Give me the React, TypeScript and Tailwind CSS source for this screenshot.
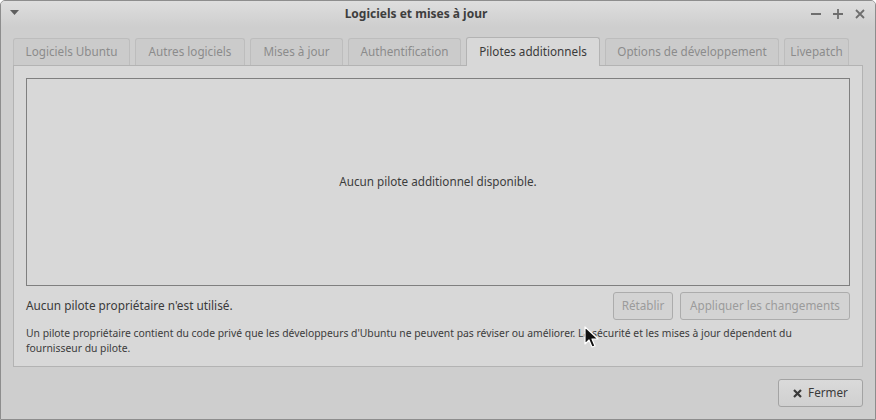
import React from "react";

const tabs = [
  { label: "Logiciels Ubuntu", w: "w-[117px]" },
  { label: "Autres logiciels", w: "w-[110px]" },
  { label: "Mises à jour", w: "w-[93px]" },
  { label: "Authentification", w: "w-[113px]" },
  { label: "Pilotes additionnels", w: "w-[134px]", active: true },
  { label: "Options de développement", w: "w-[174px]" },
  { label: "Livepatch", w: "w-[65px]" },
];

function Cursor() {
  return (
    <svg className="absolute left-[583px] top-[325px]" width="16" height="23" viewBox="0 0 16 23">
      <path
        d="M1 1 L1 18 L5 14 L8 21 L11 20 L8 13 L14 13 Z"
        fill="#111"
        stroke="#fff"
        strokeWidth="1.2"
        strokeLinejoin="round"
      />
    </svg>
  );
}

export default function App() {
  return (
    <div
      className="relative w-[876px] h-[420px] overflow-hidden bg-[#cecece] border border-[#8d8d8d] rounded-t-[5px] flex flex-col text-[#3c3c3c]"
      style={{ fontFamily: '"Noto Sans", "Open Sans", sans-serif' }}
    >
      {/* title bar */}
      <div className="relative h-[26px] shrink-0 flex items-center justify-center pr-[44px] bg-gradient-to-b from-[#dedede] to-[#cecece]">
        <svg className="absolute left-[9px] top-[9px]" width="9" height="6" viewBox="0 0 9 6">
          <path d="M0 0 L9 0 L4.5 5 Z" fill="#5e5e5e" />
        </svg>
        <span className="text-[12px] font-bold text-[#3e3e3e]">Logiciels et mises à jour</span>
        <div className="absolute right-[10px] top-[8px] flex items-center gap-[12px]">
          <svg width="10" height="10" viewBox="0 0 10 10">
            <path d="M0 5 H10" stroke="#6e6e6e" strokeWidth="1.8" />
          </svg>
          <svg width="10" height="10" viewBox="0 0 10 10">
            <path d="M0 5 H10 M5 0 V10" stroke="#6e6e6e" strokeWidth="1.8" />
          </svg>
          <svg width="10" height="10" viewBox="0 0 10 10">
            <path d="M1 1 L9 9 M9 1 L1 9" stroke="#6e6e6e" strokeWidth="1.8" />
          </svg>
        </div>
      </div>

      <div className="flex flex-col px-[12px] pt-[9px]">
        {/* tabs */}
        <div className="flex items-end gap-[5px] h-[29px]">
          {tabs.map((t) =>
            t.active ? (
              <div
                key={t.label}
                className={`${t.w} h-[29px] -mb-px relative z-10 flex items-center justify-center rounded-t-[3px] border border-b-0 border-[#b3b3b3] bg-[#d8d8d8] text-[11.7px] text-[#3a3a3a]`}
              >
                {t.label}
              </div>
            ) : (
              <div
                key={t.label}
                className={`${t.w} h-[27px] flex items-center justify-center rounded-t-[3px] border border-b-0 border-[#bdbdbd] bg-[#cbcbcb] text-[11.7px] text-[#8b8b8b]`}
              >
                {t.label}
              </div>
            )
          )}
        </div>

        {/* notebook page */}
        <div className="h-[302px] border border-[#b3b3b3] bg-[#d8d8d8] px-[12px] pt-[12px] flex flex-col">
          <div className="h-[208px] border border-[#7f7f7f] flex items-center justify-center text-[11.7px] text-[#3c3c3c]">
            Aucun pilote additionnel disponible.
          </div>
          <div className="mt-[6px] flex items-center justify-between">
            <span className="text-[11.8px] text-[#3a3a3a]">Aucun pilote propriétaire n'est utilisé.</span>
            <div className="flex gap-[7px]">
              <button className="w-[60px] h-[28px] rounded-[3px] border border-[#acacac] bg-[#d3d3d3] text-[11.7px] text-[#9b9b9b]">
                Rétablir
              </button>
              <button className="w-[170px] h-[28px] rounded-[3px] border border-[#acacac] bg-[#d3d3d3] text-[11.7px] text-[#9b9b9b]">
                Appliquer les changements
              </button>
            </div>
          </div>
          <p className="mt-[6px] max-w-[805px] text-[10.35px] leading-[15px] text-[#3c3c3c]">
            Un pilote propriétaire contient du code privé que les développeurs d'Ubuntu ne peuvent pas réviser ou améliorer. La sécurité et les mises à jour dépendent du fournisseur du pilote.
          </p>
        </div>

        {/* bottom */}
        <div className="flex justify-end mt-[12px]">
          <button className="w-[85px] h-[28px] rounded-[3px] border border-[#a3a3a3] bg-gradient-to-b from-[#dadada] to-[#d0d0d0] flex items-center justify-center gap-[6px] text-[11.7px] text-[#3a3a3a]">
            <svg width="9" height="9" viewBox="0 0 9 9">
              <path d="M1 1 L8 8 M8 1 L1 8" stroke="#3a3a3a" strokeWidth="2.2" />
            </svg>
            Fermer
          </button>
        </div>
      </div>

      <Cursor />
    </div>
  );
}
